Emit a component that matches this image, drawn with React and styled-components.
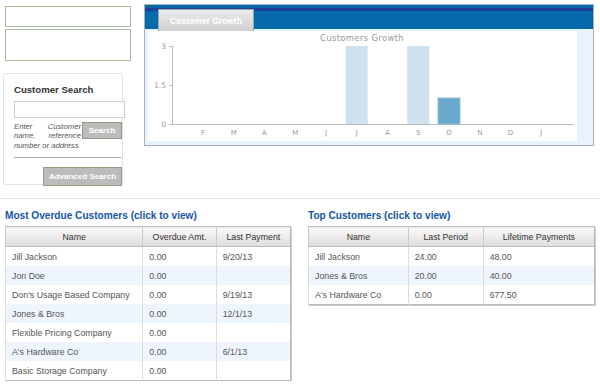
import React from 'react';
import styled, { createGlobalStyle } from 'styled-components';

const GlobalStyle = createGlobalStyle`
  body {
    margin: 0;
    background: #fff;
    font-family: "Liberation Sans", Arial, sans-serif;
    color: #444;
  }
`;

const overdue = [
  ['Jill Jackson', '0.00', '9/20/13'],
  ['Jon Doe', '0.00', ''],
  ["Don's Usage Based Company", '0.00', '9/19/13'],
  ['Jones & Bros', '0.00', '12/1/13'],
  ['Flexible Pricing Company', '0.00', ''],
  ["A's Hardware Co", '0.00', '6/1/13'],
  ['Basic Storage Company', '0.00', ''],
];

const top = [
  ['Jill Jackson', '24.00', '48.00'],
  ['Jones & Bros', '20.00', '40.00'],
  ["A's Hardware Co", '0.00', '677.50'],
];

const months = ['F', 'M', 'A', 'M', 'J', 'J', 'A', 'S', 'O', 'N', 'D', 'J'];
const values = [0, 0, 0, 0, 0, 3, 0, 3, 1, 0, 0, 0];

const Page = styled.div`
  width: 600px;
`;

const TopArea = styled.div`
  display: flex;
  padding-top: 4px;
  height: 190px;
`;

const LeftCol = styled.div`
  width: 141px;
  padding-left: 3px;
`;

const EmptyBox = styled.div`
  margin-left: 2px;
  width: 124px;
  height: ${p => p.$h}px;
  border: 1px solid #a9bb9c;
  margin-top: ${p => p.$mt}px;
`;

const SearchCard = styled.div`
  margin-top: 12px;
  width: 108px;
  height: 104px;
  border: 1px solid #e2e2e2;
  border-radius: 2px;
  padding: 6px 0 0 10px;
`;

const CardTitle = styled.div`
  font-size: 9.6px;
  font-weight: bold;
  color: #333;
  margin-top: 4px;
`;

const Input = styled.div`
  margin-top: 6px;
  width: 109px;
  height: 15px;
  border: 1px solid #ccc;
  background: #fff;
`;

const SearchRow = styled.div`
  display: flex;
  gap: 1px;
  margin-top: 4px;
`;

const Hint = styled.div`
  width: 67px;
  font-size: 7.7px;
  font-style: italic;
  color: #555;
  line-height: 9.3px;
  text-align: justify;
`;

const GrayButton = styled.div`
  background: #bcbcbc;
  border: 1px solid #8f9e82;
  color: #fff;
  font-weight: bold;
  font-size: 8px;
  display: flex;
  align-items: center;
  justify-content: center;
  width: ${p => p.$w}px;
  height: ${p => p.$h}px;
  margin-left: ${p => p.$ml || 0}px;
`;

const Rule = styled.div`
  width: 107px;
  margin: 7px 0 9px;
  border-top: 1px solid #aaa;
`;

const ChartPanel = styled.div`
  width: 448px;
  height: 140px;
  border: 1px solid #aab0b8;
  background: #eaf3fd;
  display: flex;
  flex-direction: column;
`;

const PanelHead = styled.div`
  height: 21px;
  background: #046aab;
  border-top: 3px solid #0467a8;
  box-shadow: inset 0 3px 0 #213f95;
  display: flex;
  align-items: flex-end;
  padding-left: 13px;
`;

const Tab = styled.div`
  width: 94px;
  height: 21px;
  margin-bottom: -2px;
  background: linear-gradient(#ececec, #cfcfcf);
  border: 1px solid #9aa;
  border-bottom: none;
  color: #fff;
  font-weight: bold;
  font-size: 8.5px;
  display: flex;
  align-items: center;
  justify-content: center;
`;

const ChartBox = styled.div`
  margin: 2px 0 0 3px;
  width: 429px;
  height: 110px;
  background: #fff;
`;

const Divider = styled.div`
  border-top: 1px solid #e6e6e6;
  margin-top: 4px;
`;

const Bottom = styled.div`
  display: flex;
  padding: 11px 0 0 5px;
`;

const Section = styled.div`
  width: ${p => p.$w}px;
  margin-right: ${p => p.$mr || 0}px;
`;

const SectionTitle = styled.div`
  font-size: 10.1px;
  font-weight: bold;
  color: #1556a6;
  height: 16px;
`;

const Table = styled.table`
  width: 100%;
  border-collapse: collapse;
  border: 1px solid #bbb;
  box-shadow: 1px 1px 0 #ccc;
  font-size: 8.8px;
`;

const Th = styled.th`
  font-weight: normal;
  color: #333;
  height: 19px;
  padding: 0;
  background: linear-gradient(#fafafa, #dedede);
  border-left: 1px solid #ccc;
  border-bottom: 1px solid #bbb;
  width: ${p => p.$w}px;
`;

const Tr = styled.tr`
  background: ${p => (p.$alt ? '#eef5fd' : '#fff')};
`;

const Td = styled.td`
  height: 19px;
  padding: 0 0 0 6px;
  color: #555;
  border-left: 1px solid #ddd;
  vertical-align: middle;
`;

const Chart = () => {
  const x0 = 24;
  const yTop = 15;
  const yBot = 93;
  const step = 30.75;
  return (
    <svg width="429" height="110" fontFamily="'DejaVu Sans', sans-serif">
      <text x="214" y="10" fontSize="8.5" fill="#999" textAnchor="middle" letterSpacing="0.3">
        Customers Growth
      </text>
      <line x1={x0 + 0.5} y1={yTop} x2={x0 + 0.5} y2={yBot} stroke="#bbb" />
      <line x1={x0} y1={yBot + 0.5} x2="426" y2={yBot + 0.5} stroke="#bbb" />
      {[[3, yTop], [1.5, (yTop + yBot) / 2], [0, yBot]].map(([v, y]) => (
        <g key={v}>
          <line x1={x0 - 3} y1={y + 0.5} x2={x0} y2={y + 0.5} stroke="#bbb" />
          <text x={x0 - 6} y={y + 3} fontSize="7.5" fill="#999" textAnchor="end">{v}</text>
        </g>
      ))}
      {months.map((m, i) => {
        const cx = 55 + i * step;
        const h = (values[i] / 3) * (yBot - yTop);
        return (
          <g key={i}>
            {values[i] > 0 && (
              <rect
                x={cx - 11}
                y={yBot - h}
                width="22"
                height={h}
                fill={i === 8 ? '#68a8cd' : '#cfe1ee'}
                stroke={i === 8 ? '#8fbfdc' : 'none'}
              />
            )}
            <text x={cx} y={yBot + 11} fontSize="7" fill="#999" textAnchor="middle">{m}</text>
          </g>
        );
      })}
    </svg>
  );
};

const DataTable = ({ heads, widths, rows }) => (
  <Table>
    <thead>
      <tr>
        {heads.map((h, i) => (
          <Th key={h} $w={widths[i]}>{h}</Th>
        ))}
      </tr>
    </thead>
    <tbody>
      {rows.map((r, i) => (
        <Tr key={i} $alt={i % 2 === 1}>
          {r.map((c, j) => (
            <Td key={j}>{c}</Td>
          ))}
        </Tr>
      ))}
    </tbody>
  </Table>
);

export default function App() {
  return (
    <Page>
      <GlobalStyle />
      <TopArea>
        <LeftCol>
          <EmptyBox $h={19} $mt={2} />
          <EmptyBox $h={30} $mt={2} />
          <SearchCard>
            <CardTitle>Customer Search</CardTitle>
            <Input />
            <SearchRow>
              <Hint>Enter Customer name, reference number or address</Hint>
              <GrayButton $w={38} $h={15}>Search</GrayButton>
            </SearchRow>
            <Rule />
            <GrayButton $w={77} $h={17} $ml={29}>Advanced Search</GrayButton>
          </SearchCard>
        </LeftCol>
        <ChartPanel>
          <PanelHead>
            <Tab>Customer Growth</Tab>
          </PanelHead>
          <ChartBox>
            <Chart />
          </ChartBox>
        </ChartPanel>
      </TopArea>
      <Divider />
      <Bottom>
        <Section $w={286} $mr={17}>
          <SectionTitle>Most Overdue Customers (click to view)</SectionTitle>
          <DataTable
            heads={['Name', 'Overdue Amt.', 'Last Payment']}
            widths={[138, 73, 74]}
            rows={overdue}
          />
        </Section>
        <Section $w={287}>
          <SectionTitle>Top Customers (click to view)</SectionTitle>
          <DataTable
            heads={['Name', 'Last Period', 'Lifetime Payments']}
            widths={[100, 75, 112]}
            rows={top}
          />
        </Section>
      </Bottom>
    </Page>
  );
}
